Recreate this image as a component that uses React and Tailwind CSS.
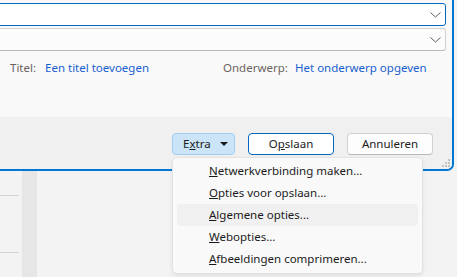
import React from 'react';

function Chevron() {
  return (
    <svg width="11" height="6" viewBox="0 0 11 6" className="text-[#5f5f5f]">
      <path d="M0.5 0.5 L5.5 5 L10.5 0.5" fill="none" stroke="currentColor" strokeWidth="1" />
    </svg>
  );
}

function ComboBox({ focused }) {
  return (
    <div
      className={
        'h-[23px] -ml-[2px] flex items-center justify-end pr-[4px] rounded-r-[3px] border ' +
        (focused ? 'bg-white border-[#0067c0]' : 'bg-[#fcfcfc] border-[#d0d0d0] border-b-[#b8b8b8]')
      }
    >
      <Chevron />
    </div>
  );
}

const menuItems = [
  { key: 'N', rest: 'etwerkverbinding maken...' },
  { key: 'O', rest: 'pties voor opslaan...' },
  { key: 'A', rest: 'lgemene opties...', active: true },
  { key: 'W', rest: 'ebopties...' },
  { key: 'A', rest: 'fbeeldingen comprimeren...' },
];

export default function App() {
  return (
    <div
      className="relative w-[457px] h-[277px] bg-[#f3f3f3] overflow-hidden text-[11.5px] text-[#1b1b1b]"
      style={{ fontFamily: '"Segoe UI", "Noto Sans", sans-serif' }}
    >
      {/* dialog window */}
      <div className="w-[454px] h-[171px] flex flex-col border-r-2 border-b-2 border-[#0078d4] rounded-br-[7px] overflow-hidden">
        <div className="h-[117px] bg-[#f9f9f9] pt-[3px] pr-[6px] flex flex-col gap-[2px]">
          <ComboBox focused />
          <ComboBox />
          <div className="flex items-center h-[30px] pl-[10px]">
            <span className="text-[#6b6461] w-[35px]">Titel:</span>
            <span className="text-[#1a5fd0] w-[178px]">Een titel toevoegen</span>
            <span className="text-[#6b6461] w-[72px]">Onderwerp:</span>
            <span className="text-[#1a5fd0]">Het onderwerp opgeven</span>
          </div>
        </div>
        <div className="flex-1 bg-[#f0f0f0] flex justify-end items-start pt-[16px] pr-[19px] relative">
          <div className="flex gap-[13px]">
            <div className="w-[63px] h-[22px] rounded-[4px] bg-[#cce4f7] border border-[#9fcdf2] flex items-center pl-[10px] pr-[6px] justify-between">
              <span>
                E<span className="underline">x</span>tra
              </span>
              <svg width="8" height="4" viewBox="0 0 8 4">
                <path d="M0 0 H8 L4 4 Z" fill="#1b1b1b" />
              </svg>
            </div>
            <div className="w-[86px] h-[22px] rounded-[4px] bg-white border border-[#0067c0] flex items-center justify-center">
              <span>
                O<span className="underline">p</span>slaan
              </span>
            </div>
            <div className="w-[86px] h-[22px] rounded-[4px] bg-[#fdfdfd] border border-[#d0d0d0] border-b-[#b8b8b8] flex items-center justify-center">
              Annuleren
            </div>
          </div>
          {/* resize grip */}
          <svg width="8" height="8" viewBox="0 0 8 8" className="absolute right-[2px] bottom-[2px]">
            <rect x="6" y="0" width="2" height="2" fill="#c4c4c4" />
            <rect x="3" y="3" width="2" height="2" fill="#c4c4c4" />
            <rect x="6" y="3" width="2" height="2" fill="#c4c4c4" />
            <rect x="0" y="6" width="2" height="2" fill="#c4c4c4" />
            <rect x="3" y="6" width="2" height="2" fill="#c4c4c4" />
            <rect x="6" y="6" width="2" height="2" fill="#c4c4c4" />
          </svg>
        </div>
      </div>

      {/* behind the dialog */}
      <div className="flex h-[106px]">
        <div className="w-[19px] flex flex-col">
          <div className="h-[24px]" />
          <div className="h-[1px] bg-[#d2d2d2]" />
          <div className="h-[56px]" />
          <div className="h-[1px] bg-[#d2d2d2]" />
        </div>
        <div className="w-[3px]" />
        <div className="w-[15px] bg-[#e6e6e6]" />
        <div className="flex-1" />
      </div>

      {/* dropdown menu */}
      <div className="absolute left-[172px] top-[157px] w-[251px] h-[117px] bg-[#f9f9f9] border border-[#e3e3e3] rounded-[5px] shadow-[0_2px_4px_rgba(0,0,0,0.08)] pt-[2px] px-[4px] flex flex-col">
        {menuItems.map((item, i) => (
          <div
            key={i}
            className={
              'h-[22px] flex items-center pl-[32px] rounded-[4px] ' + (item.active ? 'bg-[#f0f0f0]' : '')
            }
          >
            <span>
              <span className="underline">{item.key}</span>
              {item.rest}
            </span>
          </div>
        ))}
      </div>
    </div>
  );
}
